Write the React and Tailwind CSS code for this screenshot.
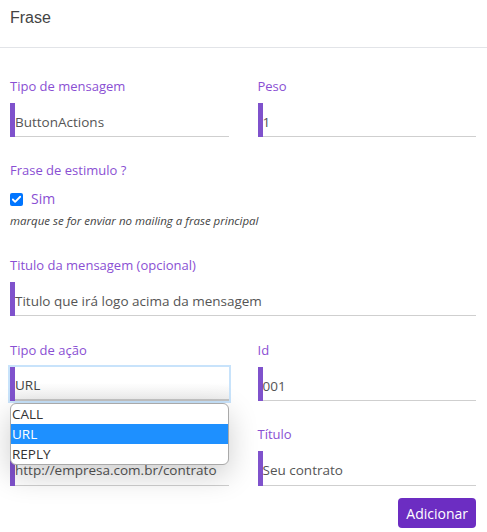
import { Check } from "lucide-react";

const FONT = { fontFamily: '"Open Sans", "Noto Sans", sans-serif' };

function Label({ children }) {
  return <div className="h-[18px] text-[13px] leading-[18px] text-[#8a4fd3]">{children}</div>;
}

function Field({ label, value, tall }) {
  return (
    <div>
      <Label>{label}</Label>
      <div className={tall ? "mt-[8px] flex h-[35px]" : "mt-[8px] flex h-[34px]"}>
        <div className="w-[5px] shrink-0 bg-[#7f52cc]" />
        <div className="flex flex-1 items-center border-b border-[#cfcfcf] pt-[4px] text-[13.5px] leading-[14px] text-[#555]">
          {value}
        </div>
      </div>
    </div>
  );
}

function SelectField({ label, value, options }) {
  return (
    <div>
      <Label>{label}</Label>
      <div className="relative mt-[8px]">
        <div className="flex h-[34px] ring-2 ring-[#c8e3fb]">
          <div className="w-[5px] shrink-0 bg-[#7f52cc]" />
          <div className="flex flex-1 items-center border-b-2 border-[#c4c4c4] bg-gradient-to-b from-white via-white to-[#efefef] pt-[4px] text-[13.5px] leading-[14px] text-[#444]">
            {value}
          </div>
        </div>
        <div className="absolute left-0 top-[36px] z-10 w-full overflow-hidden rounded-[6px] border border-[#a9a9a9] bg-white shadow-[0_10px_30px_rgba(0,0,0,0.2)]">
          {options.map((o) => (
            <div
              key={o}
              className={
                o === value
                  ? "flex h-[20px] items-center bg-[#1e90ff] pl-[1px] text-[13.5px] leading-[15px] text-white"
                  : "flex h-[20px] items-center pl-[1px] text-[13.5px] leading-[15px] text-[#333]"
              }
            >
              {o}
            </div>
          ))}
        </div>
      </div>
    </div>
  );
}

export default function App() {
  return (
    <div className="min-h-[532px] w-[487px] bg-white" style={FONT}>
      <div className="h-[48px] border-b border-[#e2e4e8] px-[10px] pt-[8px]">
        <h1
          className="text-[16px] leading-[20px] text-[#444]"
          style={{ fontFamily: '"Liberation Sans", Arial, sans-serif' }}
        >
          Frase
        </h1>
      </div>

      <div className="pl-[10px] pr-[11px] pt-[29px]">
        <div className="grid grid-cols-2 gap-x-[29px]">
          <Field label="Tipo de mensagem" value="ButtonActions" />
          <Field label="Peso" value="1" />
        </div>

        <div className="mt-[24px]">
          <Label>Frase de estimulo ?</Label>
          <div className="mt-[11px] flex items-center gap-[8px]">
            <span className="flex h-[13px] w-[13px] items-center justify-center rounded-[2px] bg-[#0075ff]">
              <Check className="h-[11px] w-[11px] text-white" strokeWidth={4} />
            </span>
            <span className="text-[14px] leading-[18px] text-[#8a4fd3]">Sim</span>
          </div>
          <p className="mt-[6px] text-[11.5px] italic leading-[14px] text-[#444]">
            marque se for enviar no mailing a frase principal
          </p>
        </div>

        <div className="mt-[28px]">
          <Field label="Titulo da mensagem (opcional)" value="Titulo que irá logo acima da mensagem" />
        </div>

        <div className="mt-[25px] grid grid-cols-2 gap-x-[29px] gap-y-[24px]">
          <div className="relative z-10">
            <SelectField label="Tipo de ação" value="URL" options={["CALL", "URL", "REPLY"]} />
          </div>
          <Field label="Id" value="001" />
          <Field label="" value="http://empresa.com.br/contrato" tall />
          <Field label="Título" value="Seu contrato" tall />
        </div>

        <div className="mt-[12px] flex justify-end">
          <button className="h-[30px] rounded-[4px] bg-[#6c2dc2] px-[8px] text-[14px] text-white">
            Adicionar
          </button>
        </div>
      </div>
    </div>
  );
}
